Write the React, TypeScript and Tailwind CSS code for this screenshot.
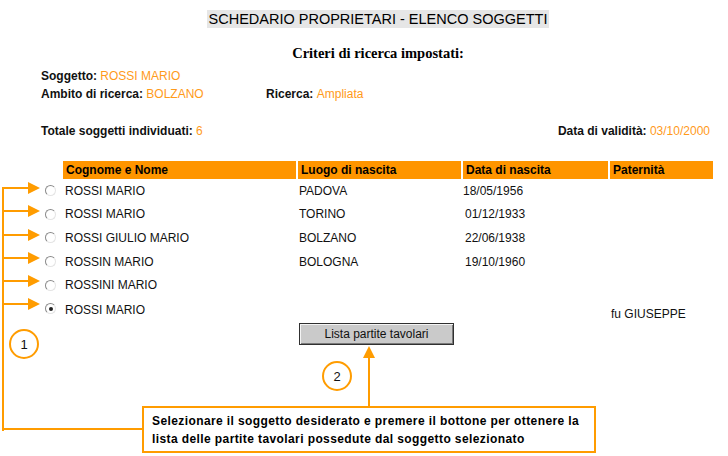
import React from 'react'

const ORANGE = '#ff9c00'

const rows = [
  { name: 'ROSSI MARIO', place: 'PADOVA', date: '18/05/1956', father: '', checked: false },
  { name: 'ROSSI MARIO', place: 'TORINO', date: '01/12/1933', father: '', checked: false },
  { name: 'ROSSI GIULIO MARIO', place: 'BOLZANO', date: '22/06/1938', father: '', checked: false },
  { name: 'ROSSIN MARIO', place: 'BOLOGNA', date: '19/10/1960', father: '', checked: false },
  { name: 'ROSSINI MARIO', place: '', date: '', father: '', checked: false },
  { name: 'ROSSI MARIO', place: '', date: '', father: 'fu GIUSEPPE', checked: true },
]

function Radio({ checked }: { checked: boolean }) {
  return (
    <span className="flex h-[11px] w-[11px] items-center justify-center rounded-full border border-t-[#8a8a8a] border-l-[#8a8a8a] border-r-[#e4e4e4] border-b-[#e4e4e4] bg-white">
      {checked && <span className="h-[4px] w-[4px] rounded-full bg-[#222]" />}
    </span>
  )
}

function Annotations() {
  const arrowYs = [188, 211, 235, 258, 281, 304]
  return (
    <svg className="pointer-events-none absolute left-0 top-0" width="728" height="456">
      <g fill={ORANGE} stroke="none">
        <rect x="2" y="187" width="2" height="244" />
        <rect x="2" y="428" width="141" height="2" />
        {arrowYs.map((y) => (
          <g key={y}>
            <rect x="2" y={y - 1} width="28" height="2" />
            <polygon points={`28,${y - 6} 40,${y} 28,${y + 6}`} />
          </g>
        ))}
        <rect x="368" y="355" width="2" height="52" />
        <polygon points="363,358 369,346 375,358" />
      </g>
      <g fill="none" stroke={ORANGE} strokeWidth="2">
        <circle cx="24" cy="344" r="14" />
        <circle cx="337" cy="376" r="14" />
      </g>
      <g fontFamily='"Liberation Sans", Arial, sans-serif' fontSize="13" fill="#111" textAnchor="middle">
        <text x="24" y="349">1</text>
        <text x="337" y="381">2</text>
      </g>
    </svg>
  )
}

export default function App() {
  return (
    <div className="relative h-[456px] w-[728px] overflow-hidden bg-white font-['Liberation_Sans',Arial,sans-serif] text-[12px] text-[#111]">
      <div className="pl-[28px]">
        <div className="flex justify-center pt-[10px]">
          <span className="flex h-[18px] items-center bg-[#e6e6e6] px-[2px] text-[14.5px] leading-none text-black">
            SCHEDARIO PROPRIETARI - ELENCO SOGGETTI
          </span>
        </div>

        <div className="mt-[17px] text-center font-['Liberation_Serif',serif] text-[14.5px] font-bold leading-[16px] text-black">
          Criteri di ricerca impostati:
        </div>
      </div>

      <div className="mt-[6px] pl-[41px] leading-[18px]">
        <div>
          <span className="font-bold">Soggetto: </span>
          <span className="text-[#ff9a1a]">ROSSI MARIO</span>
        </div>
        <div className="flex">
          <div className="w-[225px]">
            <span className="font-bold">Ambito di ricerca: </span>
            <span className="text-[#ff9a1a]">BOLZANO</span>
          </div>
          <div>
            <span className="font-bold">Ricerca: </span>
            <span className="text-[#ff9a1a]">Ampliata</span>
          </div>
        </div>
      </div>

      <div className="mt-[19px] flex justify-between pl-[41px] pr-[18px] leading-[18px]">
        <div>
          <span className="font-bold">Totale soggetti individuati: </span>
          <span className="text-[#ff9a1a]">6</span>
        </div>
        <div>
          <span className="font-bold">Data di validità: </span>
          <span className="text-[#ff9a1a]">03/10/2000</span>
        </div>
      </div>

      <div className="mt-[21px] ml-[40px] grid grid-cols-[21px_233px_163px_145px_103px] gap-x-[2px]">
        <div />
        <div className="flex h-[18px] items-center bg-[#ff9500] pl-[3px] font-bold text-black">Cognome e Nome</div>
        <div className="flex h-[18px] items-center bg-[#ff9500] pl-[3px] font-bold text-black">Luogo di nascita</div>
        <div className="flex h-[18px] items-center bg-[#ff9500] pl-[3px] font-bold text-black">Data di nascita</div>
        <div className="flex h-[18px] items-center bg-[#ff9500] pl-[3px] font-bold text-black">Paternità</div>

        {rows.map((r, i) => (
          <React.Fragment key={i}>
            <div className="flex h-[23.6px] items-center pl-[5px]">
              <Radio checked={r.checked} />
            </div>
            <div className="flex items-center pl-[2px]">{r.name}</div>
            <div className="flex items-center pl-[1px]">{r.place}</div>
            <div className={i === 0 ? 'flex items-center' : 'flex items-center pl-[2px]'}>{r.date}</div>
            <div className="flex items-center pt-[8px] pl-[1px]">{r.father}</div>
          </React.Fragment>
        ))}
      </div>

      <div className="ml-[299px]">
        <button className="flex h-[22px] w-[155px] items-center justify-center border border-[#303030] bg-[#cacaca] text-[12px] text-[#111] shadow-[inset_1px_1px_0_#f4f4f4,inset_-1px_-1px_0_#7a7a7a]">
          Lista partite tavolari
        </button>
      </div>

      <Annotations />

      <div className="absolute left-[142px] top-[406px] h-[47px] w-[454px] border-2 border-[#ff9c00] bg-white pl-[8px] pr-[1px] pt-[4px] text-[12px] font-bold leading-[18px] tracking-[0.4px] text-black">
        Selezionare il soggetto desiderato e premere il bottone per ottenere la lista delle partite tavolari possedute dal soggetto selezionato
      </div>
    </div>
  )
}
